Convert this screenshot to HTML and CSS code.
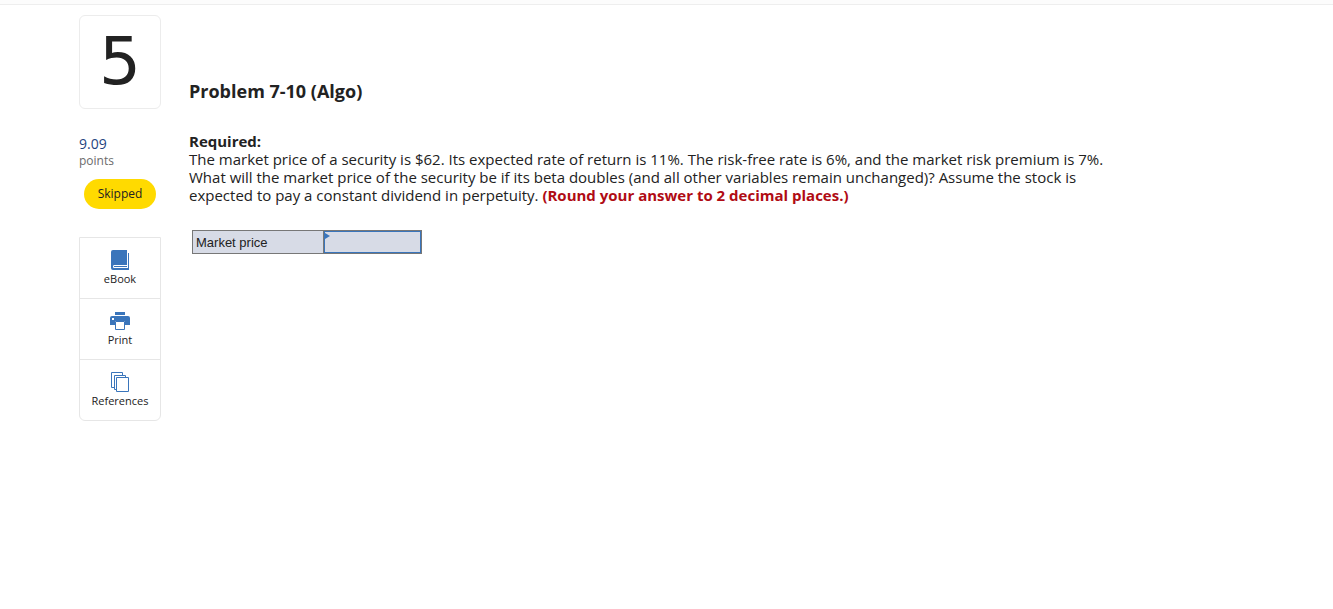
FILE: index.html
```html
<!DOCTYPE html>
<html lang="en">
<head>
  <meta charset="UTF-8">
  <meta name="viewport" content="width=device-width, initial-scale=1.0">
  <title>Problem 7-10 (Algo)</title>
  <link rel="stylesheet" href="styles.css">
</head>
<body>
  <header class="top-bar"></header>

  <div class="page">
    <!-- Question number, score and tools -->
    <aside class="sidebar">
      <div class="question-number">5</div>
      <div class="score">
        <span class="score-value">9.09</span>
        <span class="score-label">points</span>
      </div>
      <div class="status">Skipped</div>
      <nav class="tools">
        <a href="#" class="tool">
          <svg width="20" height="20" viewBox="0 0 20 20">
            <path d="M3 0H17V15H4Q3 15 3 16.500Q3 18 4 18H18V3H19V20H3Q1 20 1 18V2Q1 0 3 0Z" fill="#3a75bb"/>
            <path d="M4 16.500H17" stroke="#3a75bb"/>
          </svg>
          eBook
        </a>
        <a href="#" class="tool">
          <svg width="20" height="20" viewBox="0 0 20 20">
            <path d="M5 1H15V4H5Z" fill="#3a75bb"/>
            <path d="M2 5Q0 5 0 7V14H5V10H15V14H20V7Q20 5 18 5Z" fill="#3a75bb"/>
            <path d="M2 7H4V9H2Z" fill="#fff"/>
            <path d="M5.500 10.500H14.500V18.500H5.500Z" fill="#fff" stroke="#3a75bb"/>
          </svg>
          Print
        </a>
        <a href="#" class="tool">
          <svg width="20" height="20" viewBox="0 0 20 20" fill="#fff" stroke="#3a75bb">
            <path d="M1.500 .5H12.500V15.500H1.500Z"/>
            <path d="M4.500 3.500H15.500V17.500H4.500Z"/>
            <path d="M6.500 5.500H18.500V19.500H6.500Z"/>
          </svg>
          References
        </a>
      </nav>
    </aside>

    <!-- Problem text and answer table -->
    <main class="problem">
      <h1>Problem 7-10 (Algo)</h1>
      <p class="statement">
        <b>Required:</b><br>
        The market price of a security is $62. Its expected rate of return is 11%. The risk-free rate is 6%, and the market risk premium is 7%.<br>
        What will the market price of the security be if its beta doubles (and all other variables remain unchanged)? Assume the stock is<br>
        expected to pay a constant dividend in perpetuity. <strong class="hint">(Round your answer to 2 decimal places.)</strong>
      </p>
      <table class="answer">
        <tr>
          <th scope="row"><label for="market-price">Market price</label></th>
          <td><input type="text" id="market-price"></td>
        </tr>
      </table>
    </main>
  </div>
</body>
</html>
```
FILE: styles.css
```css
* {
  margin: 0;
  padding: 0;
  box-sizing: border-box;
}

body {
  background: #fff;
  color: #222;
  font-family: "Open Sans", sans-serif;
  font-size: 15px;
}

.top-bar {
  height: 5px;
  background: #fcfcfc;
  border-bottom: 1px solid #eee;
}

.page {
  display: flex;
  gap: 28px;
  padding: 10px 79px;
}

/* Sidebar */
.sidebar {
  flex: none;
  width: 82px;
}

.question-number {
  border: 1px solid #ececec;
  border-radius: 6px;
  font-family: "DejaVu Sans", sans-serif;
  font-size: 66px;
  line-height: 92px;
  text-align: center;
}

.score {
  margin-top: 26px;
}

.score span {
  display: block;
}

.score-value {
  color: #1f4480;
  font-size: 14px;
  line-height: 18px;
}

.score-label {
  color: #6b6b6b;
  font-size: 12px;
  line-height: 16px;
}

.status {
  margin: 10px 5px 0;
  border-radius: 15px;
  background: #ffda00;
  font-size: 12px;
  line-height: 30px;
  text-align: center;
}

.tools {
  margin-top: 28px;
  border: 1px solid #e6e6e6;
  border-radius: 0 0 6px 6px;
}

.tool {
  display: block;
  box-sizing: content-box;
  height: 48px;
  padding-top: 12px;
  color: #222;
  font-size: 11px;
  line-height: 18px;
  text-align: center;
  text-decoration: none;
}

.tool + .tool {
  border-top: 1px solid #e6e6e6;
}

.tool svg {
  display: block;
  margin: 0 auto;
}

/* Problem */
.problem {
  flex: 1;
  padding-top: 64px;
}

h1 {
  font-size: 18px;
  line-height: 24px;
}

.statement {
  margin-top: 29px;
  line-height: 18px;
}

.hint {
  color: #b00b14;
}

.answer {
  margin: 26px 0 0 3px;
  width: 230px;
  border: 1px solid #777;
  border-collapse: collapse;
  background: #d7dbe6;
  font-family: "Liberation Sans", sans-serif;
  font-size: 13px;
}

.answer th {
  padding-left: 3px;
  font-weight: normal;
  text-align: left;
}

.answer td {
  position: relative;
  width: 98px;
  border-left: 1px solid #777;
}

.answer input {
  display: block;
  width: 100%;
  height: 22px;
  padding: 0 4px;
  border: 1px solid #3a75bb;
  outline: none;
  background: transparent;
  font: inherit;
}

/* Corner marker of the answer cell */
.answer td::before {
  content: "";
  position: absolute;
  top: 2px;
  left: 1px;
  border-left: 5px solid #3a75bb;
  border-top: 3px solid transparent;
  border-bottom: 3px solid transparent;
}
```
